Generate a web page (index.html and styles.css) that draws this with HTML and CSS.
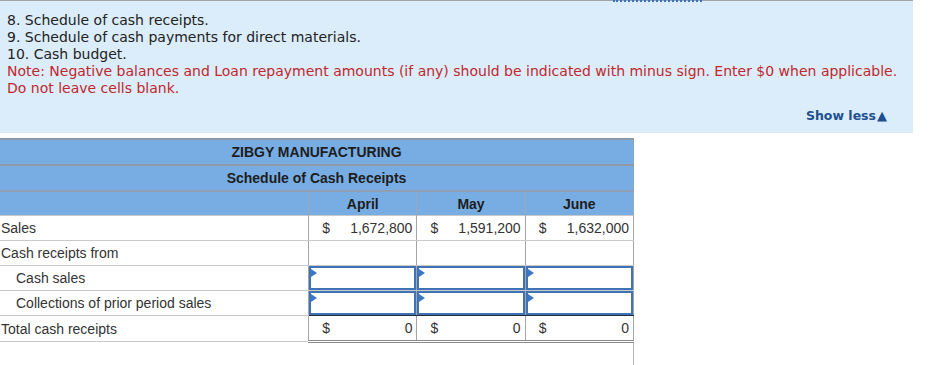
FILE: index.html
```html
<!DOCTYPE html>
<html>
<head>
<meta charset="utf-8">
<link rel="stylesheet" href="styles.css">
</head>
<body>
<div class="topbar"><span class="focus-mark"></span></div>
<div class="panel">
  <div class="line">8. Schedule of cash receipts.</div>
  <div class="line">9. Schedule of cash payments for direct materials.</div>
  <div class="line">10. Cash budget.</div>
  <div class="line note">Note: Negative balances and Loan repayment amounts (if any) should be indicated with minus sign. Enter $0 when applicable.</div>
  <div class="line note">Do not leave cells blank.</div>
  <div class="toggle-row"><span class="toggle">Show less<span class="tri">&#9650;</span></span></div>
</div>
<div class="table-wrap">
<table class="sched">
  <colgroup>
    <col class="c-label"><col class="c-sign"><col class="c-num"><col class="c-sign"><col class="c-num"><col class="c-sign"><col class="c-num">
  </colgroup>
  <tr class="hd title"><th colspan="7">ZIBGY MANUFACTURING</th></tr>
  <tr class="hd title"><th colspan="7">Schedule of Cash Receipts</th></tr>
  <tr class="hd months"><th class="blank"></th><th colspan="2">April</th><th colspan="2">May</th><th colspan="2">June</th></tr>
  <tr class="row">
    <td class="lbl">Sales</td>
    <td class="sign">$</td><td class="num">1,672,800</td>
    <td class="sign">$</td><td class="num">1,591,200</td>
    <td class="sign">$</td><td class="num">1,632,000</td>
  </tr>
  <tr class="row">
    <td class="lbl">Cash receipts from</td>
    <td class="empty" colspan="2"></td><td class="empty" colspan="2"></td><td class="empty" colspan="2"></td>
  </tr>
  <tr class="row">
    <td class="lbl indent">Cash sales</td>
    <td class="inp" colspan="2"><div class="box"><span class="flag"></span></div></td>
    <td class="inp" colspan="2"><div class="box"><span class="flag"></span></div></td>
    <td class="inp" colspan="2"><div class="box"><span class="flag"></span></div></td>
  </tr>
  <tr class="row">
    <td class="lbl indent">Collections of prior period sales</td>
    <td class="inp last" colspan="2"><div class="box"><span class="flag"></span></div></td>
    <td class="inp last" colspan="2"><div class="box"><span class="flag"></span></div></td>
    <td class="inp last" colspan="2"><div class="box"><span class="flag"></span></div></td>
  </tr>
  <tr class="row total">
    <td class="lbl">Total cash receipts</td>
    <td class="sign">$</td><td class="num">0</td>
    <td class="sign">$</td><td class="num">0</td>
    <td class="sign">$</td><td class="num">0</td>
  </tr>
</table>
<div class="after"></div>
</div>
</body>
</html>
```

FILE: styles.css
```css
html, body {
  margin: 0;
  padding: 0;
  background: #ffffff;
}

.topbar {
  width: 913px;
  height: 2px;
  background: linear-gradient(#a3a3a3 0 1px, #dbedfa 1px 2px);
  display: flex;
}

.focus-mark {
  display: block;
  margin-left: 613px;
  width: 87px;
  height: 0;
  border-bottom: 2px dotted #3b73c4;
  border-left: 1px solid #3b73c4;
  border-right: 1px solid #3b73c4;
}

.panel {
  width: 913px;
  height: 131px;
  box-sizing: border-box;
  background: #dbedfa;
  padding: 10px 0 0 7px;
  font-family: "DejaVu Sans", Verdana, sans-serif;
  font-size: 14px;
  color: #222222;
}

.line {
  line-height: 17px;
  height: 17px;
  white-space: nowrap;
}

.note {
  color: #c1272d;
}

.toggle-row {
  display: flex;
  justify-content: flex-end;
  padding-right: 26px;
  margin-top: 11px;
}

.toggle {
  font-weight: bold;
  font-size: 12.5px;
  color: #1e4f8e;
  line-height: 16px;
  display: flex;
  align-items: center;
}

.tri {
  font-size: 13px;
  margin-left: 1px;
  font-family: "DejaVu Sans", sans-serif;
}

.table-wrap {
  margin-top: 5px;
  width: 634px;
}

.sched {
  border-collapse: collapse;
  width: 634px;
  table-layout: fixed;
  font-family: "Liberation Sans", Arial, sans-serif;
  font-size: 14px;
  color: #333333;
}

.c-label { width: 308px; }
.c-sign { width: 28px; }
.c-num { width: 80px; }

.hd th {
  background: #78ade3;
  color: #1d1d1d;
  font-weight: bold;
  text-align: center;
  padding: 0;
}

.title th {
  height: 24px;
  border-top: 2px solid #909aa6;
  border-right: 1px solid #8ea3bd;
}

.months th {
  height: 23px;
  border-top: 2px solid #8e9fb6;
  border-left: 1px solid #9aa8b8;
  border-right: 1px solid #9aa8b8;
}

.months th.blank {
  border-left: none;
}

.row td {
  height: 24px;
  padding: 0;
  border-top: 1px solid #c9c9c9;
  border-bottom: 1px solid #c9c9c9;
  white-space: nowrap;
}

.row td.lbl {
  padding-left: 1px;
  border-right: 1px solid #a5a5a5;
}

.row td.indent {
  padding-left: 16px;
}

.row td.sign {
  padding-left: 13px;
}

.row td.num {
  text-align: right;
  padding-right: 4px;
  border-right: 1px solid #a5a5a5;
}

.row td.empty {
  border-right: 1px solid #a5a5a5;
}

.row td.inp {
  padding: 0;
  border-right: 1px solid #a5a5a5;
}

.row td.inp.last {
  border-bottom: 1px solid #1f2c3d;
}

.box {
  height: 20px;
  border: 2px solid #3f73b5;
  background: #ffffff;
  position: relative;
}

.flag {
  position: absolute;
  left: 0;
  top: 1px;
  width: 0;
  height: 0;
  border-top: 4px solid transparent;
  border-bottom: 4px solid transparent;
  border-left: 6px solid #3a78c6;
}

.total td.sign,
.total td.num {
  border-bottom: 3px double #8a8a8a;
}

.after {
  height: 24px;
  border-right: 1px solid #b5b5b5;
  width: 633px;
}
```
